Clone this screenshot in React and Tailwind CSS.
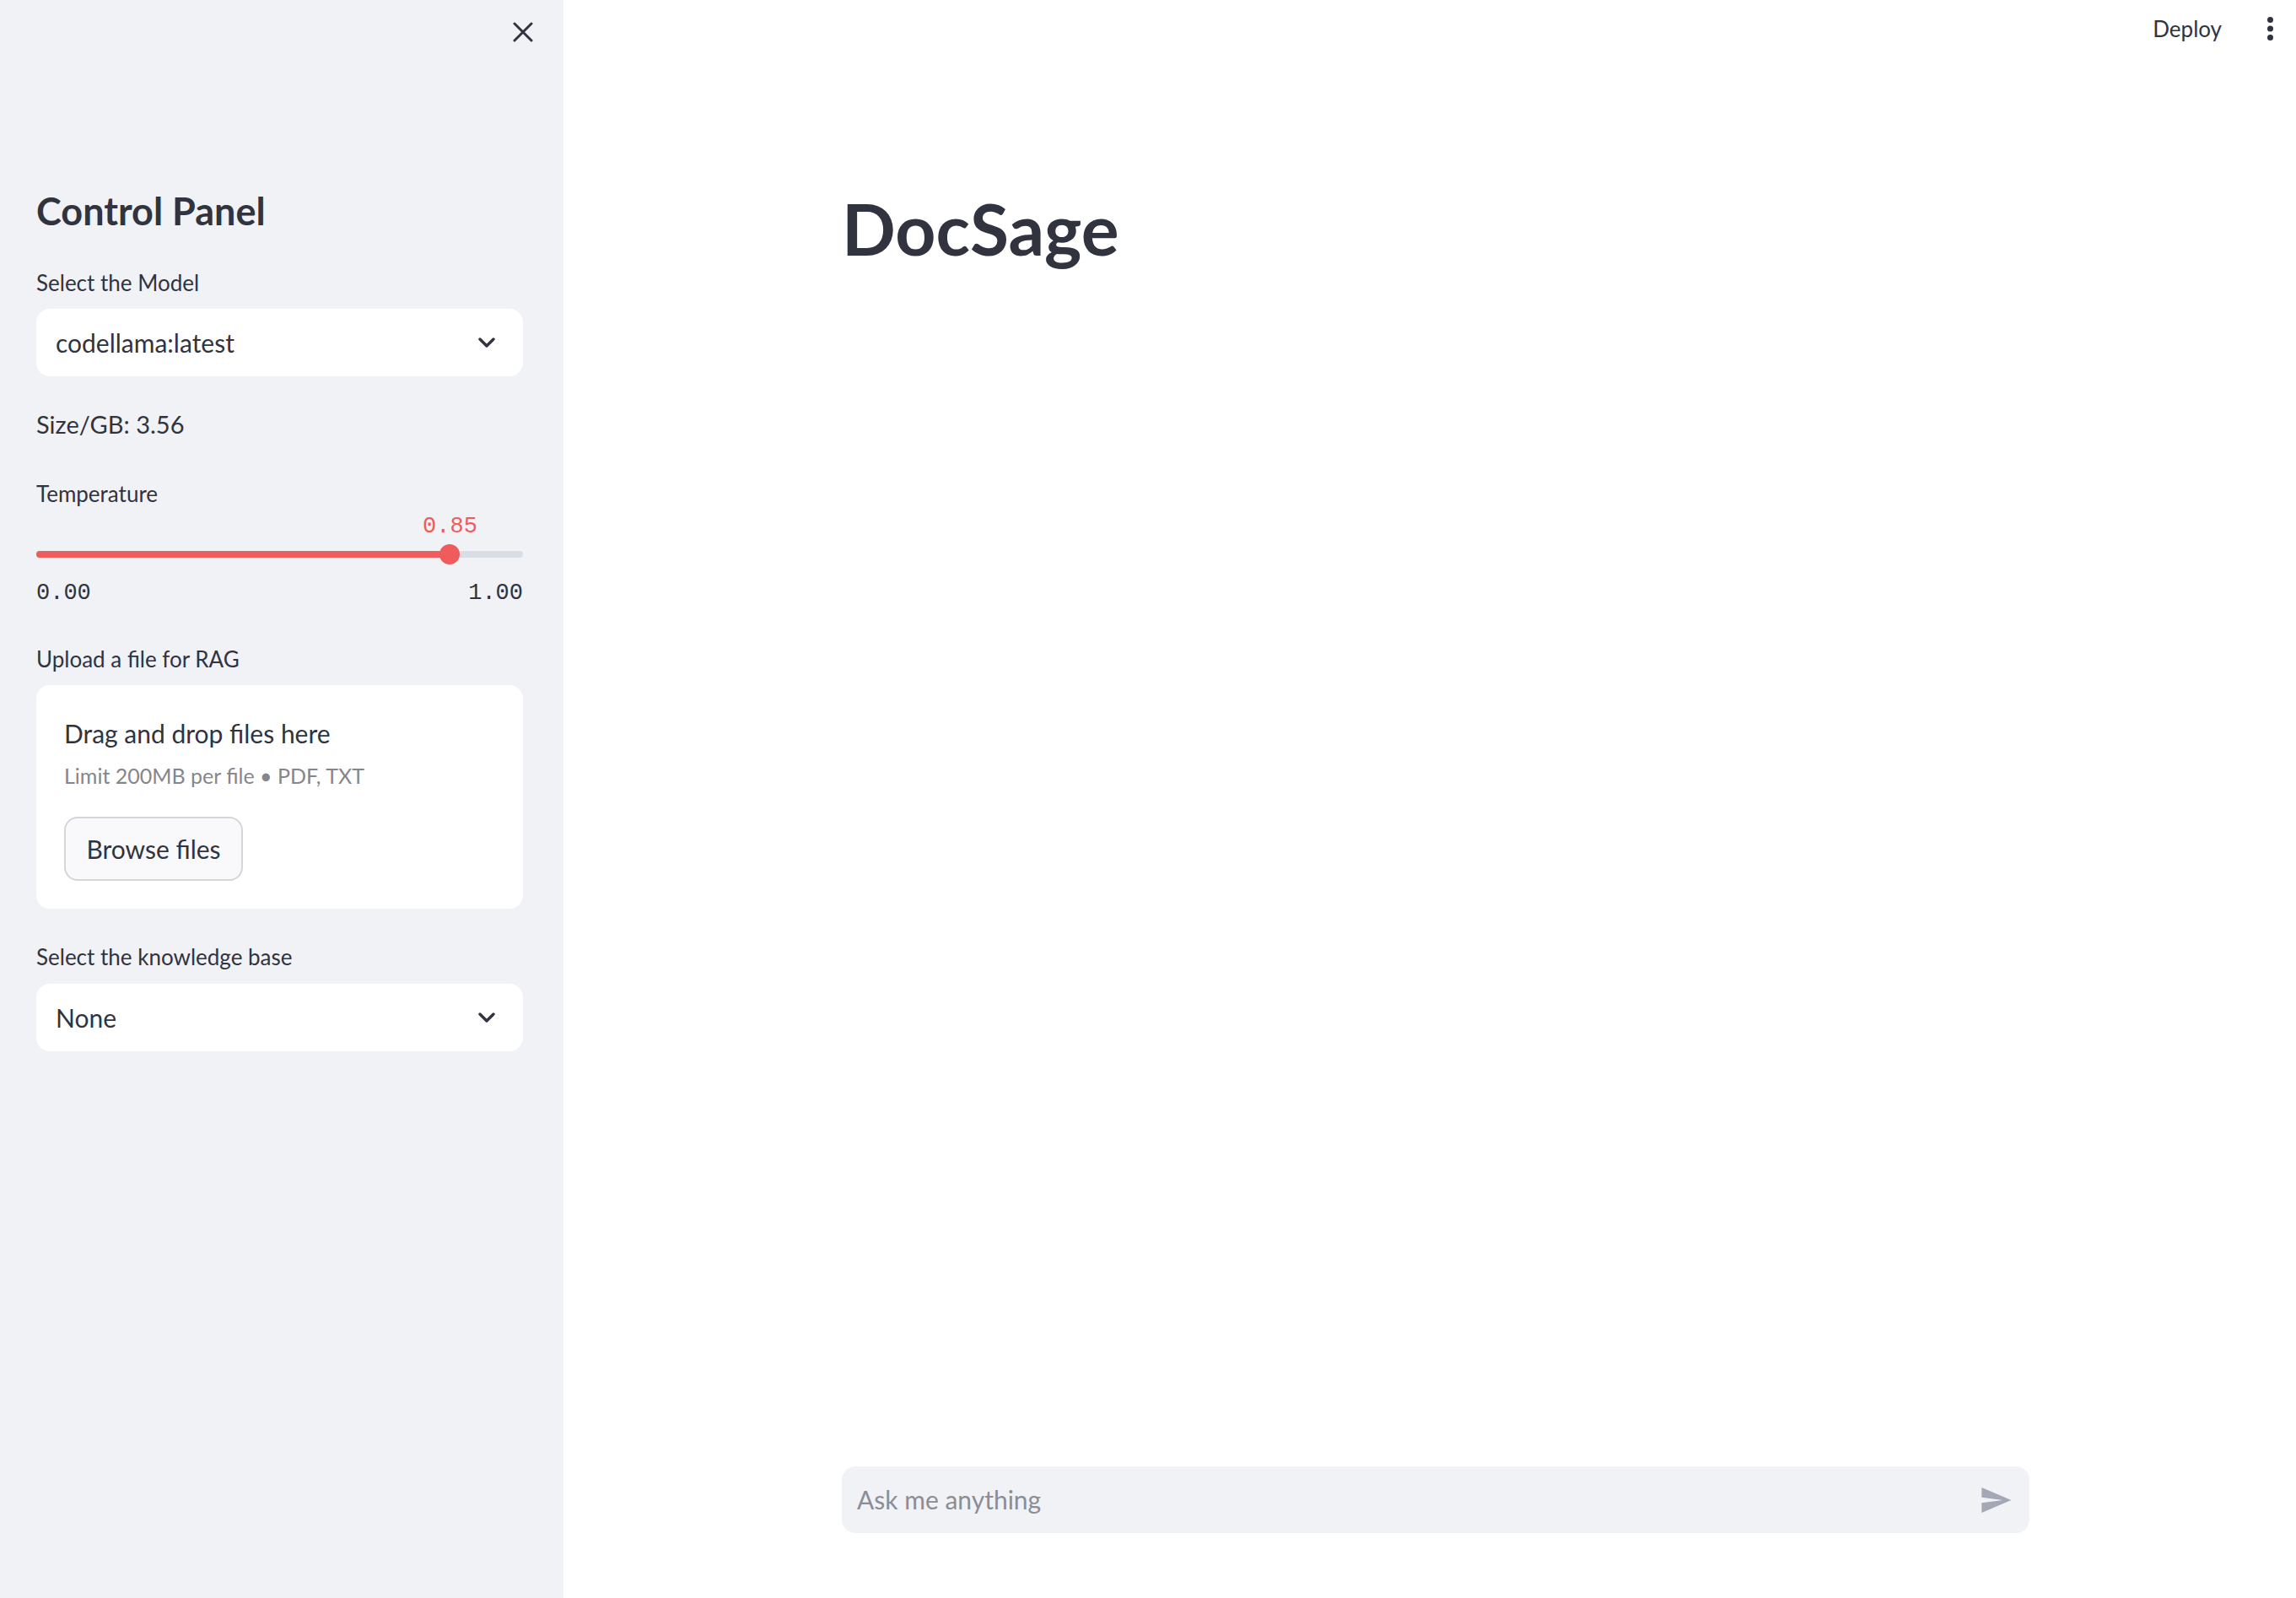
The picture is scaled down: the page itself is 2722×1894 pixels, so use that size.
import React from "react";

const sans = "font-['Lato',sans-serif]";
const mono = "font-['Liberation_Mono',monospace]";

function Chevron() {
  return (
    <svg width="20" height="12" viewBox="0 0 20 12" fill="none">
      <polyline points="2,2 10,10 18,2" stroke="#31333f" strokeWidth="3.4" strokeLinecap="round" strokeLinejoin="round" />
    </svg>
  );
}

function Select({ value }) {
  return (
    <div className="h-[80px] bg-white rounded-[16px] flex items-center justify-between pl-[23px] pr-[33px]">
      <span className="text-[30px] leading-[40px] text-[#31333f]">{value}</span>
      <Chevron />
    </div>
  );
}

function Slider({ value }) {
  const pct = value * 100;
  return (
    <div>
      {/* current value above the thumb */}
      <div className="relative h-[30px] mt-[9px]">
        <span
          className={`absolute top-0 -translate-x-1/2 ${mono} text-[27px] leading-[30px] text-[#f05b5b]`}
          style={{ left: `${pct}%` }}
        >
          {value.toFixed(2)}
        </span>
      </div>
      <div className="relative h-[24px] mt-[6px] flex items-center">
        <div className="w-full h-[8px] rounded-full bg-[#d9dde6] overflow-hidden">
          <div className="h-full bg-[#f05b5b]" style={{ width: `${pct}%` }} />
        </div>
        <div
          className="absolute top-0 w-[24px] h-[24px] -translate-x-1/2 rounded-full bg-[#f05b5b]"
          style={{ left: `${pct}%` }}
        />
      </div>
      <div className={`flex justify-between h-[30px] mt-[19px] ${mono} text-[27px] leading-[30px] text-[#31333f]`}>
        <span>0.00</span>
        <span>1.00</span>
      </div>
    </div>
  );
}

export default function App() {
  return (
    <div className={`flex w-full h-[1894px] bg-white text-[#31333f] ${sans}`}>
      {/* Sidebar */}
      <aside className="w-[668px] shrink-0 bg-[#f0f2f6] pl-[43px] pr-[48px]">
        <div className="h-[220px] flex justify-end pt-[26px] -mr-[12px]">
          <svg width="24" height="24" viewBox="0 0 24 24" fill="none">
            <path d="M2 2 L22 22 M22 2 L2 22" stroke="#31333f" strokeWidth="3" strokeLinecap="round" />
          </svg>
        </div>
        <h2 className="h-[60px] leading-[60px] text-[45px] font-bold">Control Panel</h2>

        <div className="h-[30px] leading-[30px] text-[26px] mt-[40px]">Select the Model</div>
        <div className="mt-[16px]">
          <Select value="codellama:latest" />
        </div>

        <div className="h-[40px] leading-[40px] text-[29px] mt-[37px]">Size/GB: 3.56</div>

        <div className="h-[30px] leading-[30px] text-[26px] mt-[47px]">Temperature</div>
        <Slider value={0.85} />

        <div className="h-[30px] leading-[30px] text-[26px] mt-[48px]">Upload a file for RAG</div>
        <div className="mt-[16px] h-[265px] bg-white rounded-[16px] px-[33px] pt-[37px]">
          <div className="h-[40px] leading-[40px] text-[30px]">Drag and drop files here</div>
          <div className="h-[30px] leading-[30px] text-[25px] text-[#85868d] mt-[15px]">
            Limit 200MB per file • PDF, TXT
          </div>
          <button className="mt-[34px] w-[212px] h-[76px] rounded-[16px] border-2 border-[#d6d6da] bg-[#f9f9fb] text-[30px] text-[#31333f]">
            Browse files
          </button>
        </div>

        <div className="h-[30px] leading-[30px] text-[26px] mt-[42px]">Select the knowledge base</div>
        <div className="mt-[17px]">
          <Select value="None" />
        </div>
      </aside>

      {/* Main */}
      <main className="flex-1 flex flex-col">
        <header className="h-[68px] flex items-center justify-end pr-[27px]">
          <span className="text-[26px] mr-[54px]">Deploy</span>
          <svg width="7" height="28" viewBox="0 0 7 28">
            <circle cx="3.5" cy="3.5" r="3.5" fill="#31333f" />
            <circle cx="3.5" cy="14" r="3.5" fill="#31333f" />
            <circle cx="3.5" cy="24.5" r="3.5" fill="#31333f" />
          </svg>
        </header>

        <div className="ml-[330px] w-[1408px] flex-1 flex flex-col">
          <h1 className="mt-[153px] h-[100px] leading-[100px] text-[84px] font-bold">DocSage</h1>
          <div className="flex-1" />
          <div className="mb-[77px] h-[79px] rounded-[16px] bg-[#f0f2f6] flex items-center justify-between pl-[18px] pr-[20px]">
            <span className="text-[30px] text-[#8b8d96]">Ask me anything</span>
            <svg width="40" height="40" viewBox="0 0 24 24">
              <path d="M2.01 21L23 12 2.01 3 2 10l15 2-15 2z" fill="#a4a7b4" />
            </svg>
          </div>
        </div>
      </main>
    </div>
  );
}
